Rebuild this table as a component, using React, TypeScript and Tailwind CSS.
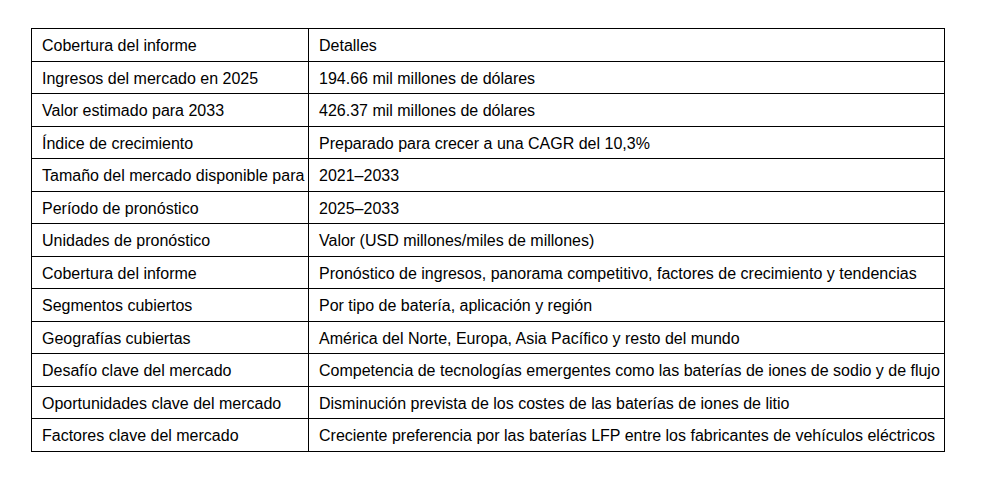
import React from 'react'

const rows: [string, string][] = [
  ['Cobertura del informe', 'Detalles'],
  ['Ingresos del mercado en 2025', '194.66 mil millones de dólares'],
  ['Valor estimado para 2033', '426.37 mil millones de dólares'],
  ['Índice de crecimiento', 'Preparado para crecer a una CAGR del 10,3%'],
  ['Tamaño del mercado disponible para', '2021–2033'],
  ['Período de pronóstico', '2025–2033'],
  ['Unidades de pronóstico', 'Valor (USD millones/miles de millones)'],
  ['Cobertura del informe', 'Pronóstico de ingresos, panorama competitivo, factores de crecimiento y tendencias'],
  ['Segmentos cubiertos', 'Por tipo de batería, aplicación y región'],
  ['Geografías cubiertas', 'América del Norte, Europa, Asia Pacífico y resto del mundo'],
  ['Desafío clave del mercado', 'Competencia de tecnologías emergentes como las baterías de iones de sodio y de flujo'],
  ['Oportunidades clave del mercado', 'Disminución prevista de los costes de las baterías de iones de litio'],
  ['Factores clave del mercado', 'Creciente preferencia por las baterías LFP entre los fabricantes de vehículos eléctricos'],
]

function App() {
  return (
    <div className="min-h-screen bg-white pl-[31px] pt-[28px] font-['Liberation_Sans',Arial,sans-serif] text-[16px] text-black">
      <table className="w-[914px] border-collapse table-fixed">
        <colgroup>
          <col className="w-[277px]" />
          <col />
        </colgroup>
        <tbody>
          {rows.map(([k, v], i) => (
            <tr key={i}>
              <td className="border border-black px-[10px] pt-[8px] pb-[5px] leading-[18.5px] whitespace-nowrap">{k}</td>
              <td className="border border-black px-[10px] pt-[8px] pb-[5px] leading-[18.5px] whitespace-nowrap">{v}</td>
            </tr>
          ))}
        </tbody>
      </table>
    </div>
  )
}

export default App
